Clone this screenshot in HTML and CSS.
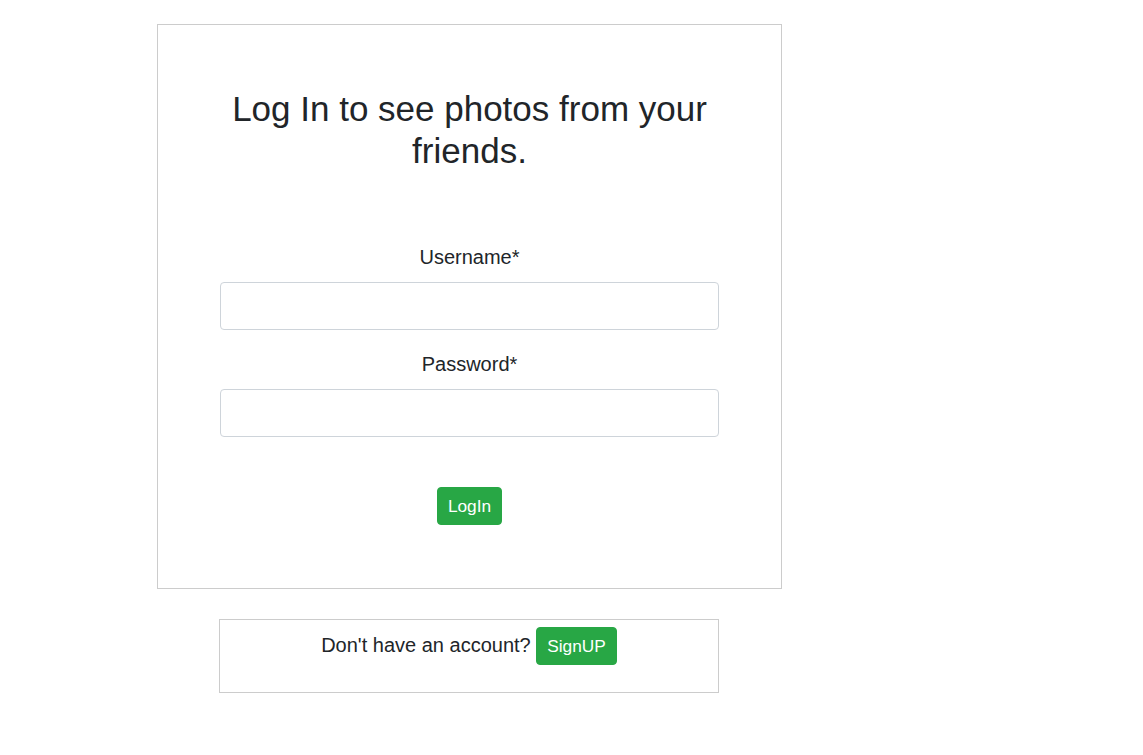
FILE: index.html
```html
<!DOCTYPE html>
<html>
<head>
<meta charset="utf-8">
<title>Log In</title>
<link rel="stylesheet" href="styles.css">
</head>
<body>
<div class="page">
  <div class="card">
    <h2 class="title">Log In to see photos from your friends.</h2>
    <form class="form">
      <div class="group">
        <label class="label" for="u">Username*</label>
        <input class="input" id="u" type="text">
      </div>
      <div class="group">
        <label class="label" for="p">Password*</label>
        <input class="input" id="p" type="password">
      </div>
      <div class="actions">
        <button class="btn" type="button">LogIn</button>
      </div>
    </form>
  </div>
  <div class="signup">
    <p class="signup-text">Don't have an account? <button class="btn" type="button">SignUP</button></p>
  </div>
</div>
</body>
</html>
```
FILE: styles.css
```css
html, body {
  margin: 0;
  padding: 0;
  background: #fff;
}
body {
  font-family: "Liberation Sans", Arial, sans-serif;
  color: #212529;
  font-size: 16px;
  line-height: 1.5;
}
.page {
  width: 625px;
  margin: 24px 0 0 157px;
  display: flex;
  flex-direction: column;
  align-items: center;
}
.card {
  box-sizing: border-box;
  width: 625px;
  border: 1px solid #cccccc;
  padding: 63px 62px 63px 62px;
}
.title {
  margin: 0;
  font-size: 35px;
  font-weight: 400;
  line-height: 42px;
  text-align: center;
}
.form {
  margin-top: 70px;
}
.group {
  display: flex;
  flex-direction: column;
  align-items: stretch;
  margin-bottom: 19px;
}
.group + .group {
  margin-bottom: 0;
}
.label {
  font-size: 20px;
  line-height: 30px;
  text-align: center;
  margin-bottom: 10px;
}
.input {
  box-sizing: border-box;
  height: 48px;
  width: 100%;
  border: 1px solid #ced4da;
  border-radius: 4px;
  padding: 8px 16px;
  font-size: 20px;
  font-family: inherit;
  background: #fff;
}
.actions {
  display: flex;
  justify-content: center;
  margin-top: 50px;
}
.btn {
  box-sizing: border-box;
  height: 38px;
  padding: 5px 10px;
  border: 1px solid #28a745;
  border-radius: 4px;
  background: #28a745;
  color: #fff;
  font-family: "Liberation Sans", Arial, sans-serif;
  font-size: 17.3px;
  line-height: 26px;
  vertical-align: baseline;
  cursor: pointer;
}
.signup {
  box-sizing: border-box;
  width: 500px;
  margin-top: 30px;
  border: 1px solid #cccccc;
  padding: 7px 0 27px;
  margin-left: -1px;
}
.signup-text {
  margin: 0;
  text-align: center;
  font-size: 20px;
  line-height: 30px;
}
```
